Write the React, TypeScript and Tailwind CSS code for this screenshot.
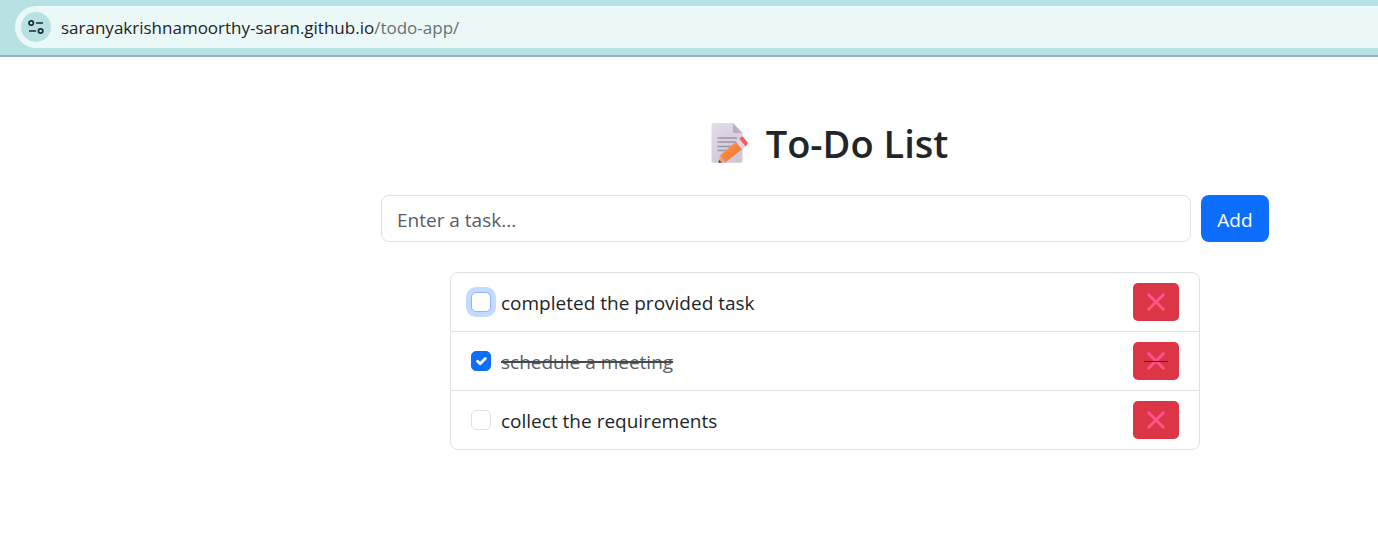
import { useState } from "react";
import type { FormEvent } from "react";

type Task = { id: number; text: string; done: boolean };

const initialTasks: Task[] = [
  { id: 1, text: "completed the provided task", done: false },
  { id: 2, text: "schedule a meeting", done: true },
  { id: 3, text: "collect the requirements", done: false },
];

function SiteSettingsIcon() {
  return (
    <svg viewBox="0 0 16 16" className="size-4" fill="none" stroke="#1f2a2e" strokeWidth="1.7" aria-hidden="true">
      <circle cx="3.2" cy="4" r="2.2" />
      <path d="M8 4h7M1 12h7" />
      <circle cx="12.6" cy="12" r="2.2" />
    </svg>
  );
}

function MemoIcon() {
  return (
    <svg viewBox="0 0 40 42" className="h-[42px] w-10 shrink-0" aria-hidden="true">
      <defs>
        <linearGradient id="paper" x1="0" y1="0" x2="0.6" y2="1">
          <stop offset="0" stopColor="#e2dde9" />
          <stop offset="1" stopColor="#d0c5d9" />
        </linearGradient>
        <linearGradient id="fold" x1="0" y1="1" x2="1" y2="0">
          <stop offset="0" stopColor="#aea4b8" />
          <stop offset="1" stopColor="#cfc6d8" />
        </linearGradient>
        <linearGradient id="pencil" x1="0" y1="0" x2="1" y2="1">
          <stop offset="0" stopColor="#ffa04a" />
          <stop offset="1" stopColor="#f2692f" />
        </linearGradient>
      </defs>
      <path d="M3 1H23l9.500 10v28A1.500 1.500 0 0 1 31 40.800h-28A1.500 1.500 0 0 1 1.500 39V2.500a1.500 1.500 0 0 1 1.500-1.500Z" fill="url(#paper)" />
      <path d="M23 1l9.500 10H24.500A1.500 1.500 0 0 1 23 9.500Z" fill="url(#fold)" />
      <path d="M7.500 16H27M7.500 20H27M7.500 24.500H23M7.500 28.500H18" stroke="#9c94a3" strokeWidth="1.5" />
      <path d="M10 33.500L26 19.500L32 27.300L15.500 40.300Z" fill="url(#pencil)" />
      <path d="M10 33.500L8.500 40.800L15.500 40.300Z" fill="#e9a47c" />
      <path d="M9 38L8.500 40.800L11.800 40.600Z" fill="#513052" />
      <path d="M26 19.500l3.300-2.700 6.200 7.600-3.500 2.900Z" fill="#e0d5ec" />
      <path d="M29.300 16.800l2-1.700a1.500 1.500 0 0 1 2.200.2l3.900 4.900a1.500 1.500 0 0 1-.2 2.100l-1.700 2.100Z" fill="#fb5a52" />
    </svg>
  );
}

function CrossIcon() {
  return (
    <svg viewBox="0 0 18 18" className="size-[18px]" aria-hidden="true">
      <defs>
        <linearGradient id="cross" x1="0" y1="0" x2="0" y2="18" gradientUnits="userSpaceOnUse">
          <stop offset="0" stopColor="#ff4fa0" />
          <stop offset="1" stopColor="#ff5670" />
        </linearGradient>
      </defs>
      <path d="M1.700 1.700L16.300 16.300M16.300 1.700L1.700 16.300" stroke="url(#cross)" strokeWidth="3" strokeLinecap="round" />
    </svg>
  );
}

function AddressBar() {
  return (
    <header className="border-b-2 border-[#94b3b8] bg-[#b8e1e4] pt-1.5 pb-[7px] pl-[15px]">
      <div className="flex h-[42px] items-center gap-2.5 rounded-l-full bg-[#ebf8f8] pl-1.5">
        <button type="button" aria-label="View site information" className="flex size-[30px] items-center justify-center rounded-full bg-[#b8e1e4]">
          <SiteSettingsIcon />
        </button>
        <a href="#" className="pt-0.5 text-[17px] leading-6 text-[#1f2326]">
          saranyakrishnamoorthy-saran.github.io<span className="text-[#667175]">/todo-app/</span>
        </a>
      </div>
    </header>
  );
}

export default function App() {
  const [tasks, setTasks] = useState(initialTasks);
  const [draft, setDraft] = useState("");

  const addTask = (event: FormEvent) => {
    event.preventDefault();
    if (!draft.trim()) return;
    setTasks([...tasks, { id: Date.now(), text: draft.trim(), done: false }]);
    setDraft("");
  };
  const toggle = (id: number) => setTasks(tasks.map((t) => (t.id === id ? { ...t, done: !t.done } : t)));
  const remove = (id: number) => setTasks(tasks.filter((t) => t.id !== id));

  return (
    <div className="min-h-screen bg-white font-['Open_Sans','Noto_Sans',sans-serif] text-[#212529]">
      <AddressBar />
      <main className="pt-[62px] pr-[109px] pb-12 pl-[381px]">
        <h1 className="flex items-center justify-center gap-4 pl-2 text-[38px] leading-12 font-semibold">
          <MemoIcon />
          To-Do List
        </h1>
        <form onSubmit={addTask} className="mt-7 flex gap-2.5">
          <input
            aria-label="Task"
            placeholder="Enter a task..."
            value={draft}
            onChange={(e) => setDraft(e.target.value)}
            className="h-[47px] min-w-0 flex-1 rounded-lg border border-[#dee2e6] px-[15px] pt-0.5 text-[19px] placeholder:text-[#595c5f]"
          />
          <button type="submit" className="h-[47px] w-[68px] rounded-lg bg-[#0d6efd] pt-1 text-[19px] text-white">
            Add
          </button>
        </form>
        <ul className="mx-auto mt-[30px] max-w-[750px] divide-y divide-[#dee2e6] rounded-lg border border-[#dee2e6]">
          {tasks.map((task, index) => (
            <li key={task.id} className="flex items-center justify-between px-5 py-2.5">
              <label className="flex items-center gap-2.5 text-[19px] leading-7">
                <span className="grid">
                  <input
                    type="checkbox"
                    checked={task.done}
                    onChange={() => toggle(task.id)}
                    className={`col-start-1 row-start-1 size-5 appearance-none rounded-[5px] border bg-white checked:border-[#0d6efd] checked:bg-[#0d6efd] ${
                      index === 0 ? "border-[#86b7fe] ring-[5px] ring-[#c2dbff]" : "border-[#dee2e6]"
                    }`}
                  />
                  {task.done && (
                    <svg viewBox="0 0 20 20" className="pointer-events-none col-start-1 row-start-1 size-5" fill="none" aria-hidden="true">
                      <path d="M6.500 10.200l2.600 2.600 5.200-5.300" stroke="white" strokeWidth="2.800" strokeLinecap="round" strokeLinejoin="round" />
                    </svg>
                  )}
                </span>
                <span className={task.done ? "pt-0.5 text-[#595f64] line-through decoration-[#43484c] decoration-2" : "pt-0.5"}>{task.text}</span>
              </label>
              <button
                type="button"
                aria-label={`Delete ${task.text}`}
                onClick={() => remove(task.id)}
                className="grid h-[38px] w-[46px] place-items-center rounded-[5px] bg-[#dc3545]"
              >
                <span className="col-start-1 row-start-1">
                  <CrossIcon />
                </span>
                {task.done && <span className="z-10 col-start-1 row-start-1 h-px w-6 bg-[#3b2930]" />}
              </button>
            </li>
          ))}
        </ul>
      </main>
    </div>
  );
}
